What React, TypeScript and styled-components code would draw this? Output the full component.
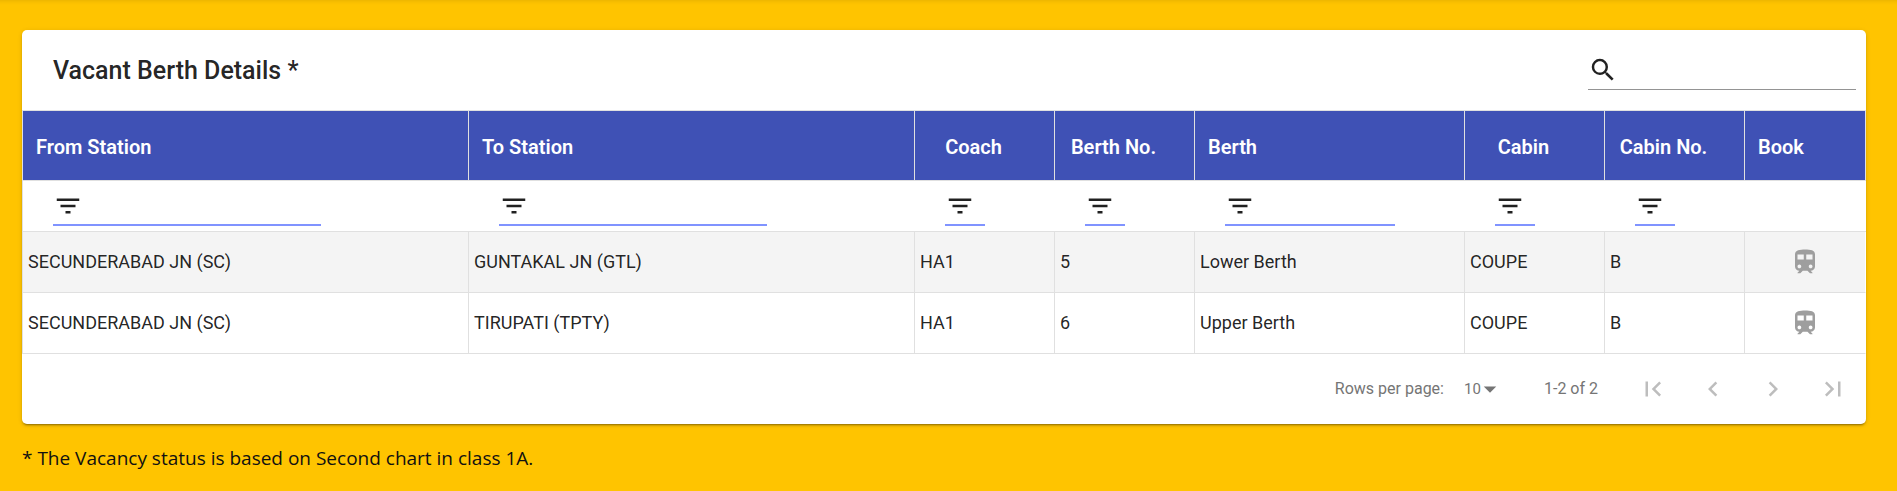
import React from "react";
import styled, { createGlobalStyle } from "styled-components";
import {
  MdArrowDropDown,
  MdChevronLeft,
  MdChevronRight,
  MdFilterList,
  MdFirstPage,
  MdLastPage,
  MdSearch,
  MdTrain,
} from "react-icons/md";

const GlobalStyle = createGlobalStyle`
  *, *::before, *::after { box-sizing: border-box; }
  body {
    margin: 0;
    background: #ffc400;
    color: rgba(0, 0, 0, 0.87);
    font-family: Roboto, "Liberation Sans", sans-serif;
  }
`;

const Page = styled.main`
  min-height: 100vh;
  padding: 30px 31px 20px 22px;
  background: #ffc400;
  box-shadow: inset 0 5px 4px -4px rgba(0, 0, 0, 0.1);
`;

const Card = styled.section`
  background: #fff;
  border-radius: 5px;
  box-shadow: 0 3px 1px -2px rgba(0, 0, 0, 0.2), 0 2px 2px 0 rgba(0, 0, 0, 0.14),
    0 1px 5px 0 rgba(0, 0, 0, 0.12);
`;

const Toolbar = styled.header`
  display: flex;
  align-items: center;
  justify-content: space-between;
  height: 80px;
  padding: 0 10px 0 31px;
`;

const Title = styled.h1`
  margin: 0;
  padding-top: 2px;
  font-size: 25px;
  line-height: 40px;
  font-weight: 500;
`;

const Field = styled.label<{ $tone: "search" | "filter" }>`
  display: flex;
  align-items: center;
  width: ${(p) => (p.$tone === "search" ? "268px" : "100%")};
  max-width: 268px;
  height: 40px;
  padding-top: ${(p) => (p.$tone === "search" ? "0" : "2px")};
  border-bottom: ${(p) => (p.$tone === "search" ? "1px solid #949494" : "2px solid #8093ff")};

  svg {
    flex: none;
    width: 30px;
    height: 30px;
  }
`;

const FieldInput = styled.input`
  flex: 1;
  min-width: 0;
  width: 0;
  padding: 0;
  border: 0;
  outline: 0;
  background: transparent;
  color: inherit;
  font: inherit;
  font-size: 18px;
`;

const Table = styled.table`
  width: 100%;
  table-layout: fixed;
  border-collapse: separate;
  border-spacing: 0;
  border-top: 1px solid #e0e0e0;
  border-left: 1px solid #e0e0e0;
`;

const Column = styled.col<{ $width?: number }>`
  width: ${(p) => (p.$width ? `${p.$width}px` : "auto")};
`;

const HeadCell = styled.th<{ $centered?: boolean }>`
  height: 70px;
  padding: 2px 35px 0 13px;
  border-right: 1px solid #e0e0e0;
  border-bottom: 1px solid #e0e0e0;
  background: #3f51b5;
  color: #fff;
  font-size: 20px;
  line-height: 24px;
  font-weight: 600;
  text-align: ${(p) => (p.$centered ? "center" : "left")};
  white-space: nowrap;
`;

const FilterCell = styled.td`
  height: 51px;
  padding: 5px 70px 5px 30px;
  border-bottom: 1px solid #e0e0e0;
`;

const BodyRow = styled.tr`
  &:nth-child(even) {
    background: #f4f4f4;
  }
`;

const BodyCell = styled.td<{ $action?: boolean }>`
  height: 61px;
  padding: 0 5px;
  border-right: 1px solid ${(p) => (p.$action ? "#fff" : "#e0e0e0")};
  border-bottom: 1px solid #e0e0e0;
  font-size: 18px;
  line-height: 24px;
  text-align: ${(p) => (p.$action ? "center" : "left")};
`;

const IconButton = styled.button<{ $size: number; $color: string }>`
  display: inline-flex;
  align-items: center;
  justify-content: center;
  width: ${(p) => p.$size}px;
  height: ${(p) => p.$size}px;
  padding: 0;
  border: 0;
  background: transparent;
  color: ${(p) => p.$color};
  vertical-align: middle;

  svg {
    width: 30px;
    height: 30px;
  }
`;

const Pagination = styled.footer`
  display: flex;
  align-items: center;
  justify-content: flex-end;
  height: 70px;
  padding-right: 3px;
  color: #757575;
  font-size: 16px;
  line-height: 20px;
`;

const PageSize = styled.label`
  display: flex;
  align-items: center;
`;

const SelectBox = styled.span`
  display: grid;
  align-items: center;
  margin-left: 20px;
  padding-bottom: 1px;
  font-size: 15px;

  select,
  svg {
    grid-area: 1 / 1;
  }

  svg {
    justify-self: end;
    width: 30px;
    height: 30px;
    pointer-events: none;
  }
`;

const Select = styled.select`
  appearance: none;
  width: 41px;
  padding: 0;
  border: 0;
  background: transparent;
  color: inherit;
  font: inherit;
`;

const Range = styled.span`
  margin: 0 25px 0 39px;
`;

const Note = styled.p`
  margin: 21px 0 0;
  color: #111;
  font-family: "Segoe UI", "Open Sans", "Noto Sans", sans-serif;
  font-size: 19px;
  line-height: 26px;
`;

const columns = [
  { title: "From Station", filter: true },
  { title: "To Station", filter: true },
  { title: "Coach", width: 140, centered: true, filter: true },
  { title: "Berth No.", width: 140, centered: true, filter: true },
  { title: "Berth", width: 270, filter: true },
  { title: "Cabin", width: 140, centered: true, filter: true },
  { title: "Cabin No.", width: 140, centered: true, filter: true },
  { title: "Book", width: 121 },
];

const berths = [
  ["SECUNDERABAD JN (SC)", "GUNTAKAL JN (GTL)", "HA1", "5", "Lower Berth", "COUPE", "B"],
  ["SECUNDERABAD JN (SC)", "TIRUPATI (TPTY)", "HA1", "6", "Upper Berth", "COUPE", "B"],
];

const pagers = [
  { label: "First page", Icon: MdFirstPage },
  { label: "Previous page", Icon: MdChevronLeft },
  { label: "Next page", Icon: MdChevronRight },
  { label: "Last page", Icon: MdLastPage },
];

export default function App() {
  return (
    <>
      <GlobalStyle />
      <Page>
        <Card>
          <Toolbar>
            <Title>Vacant Berth Details *</Title>
            <Field $tone="search">
              <MdSearch aria-hidden />
              <FieldInput type="text" aria-label="Search" />
            </Field>
          </Toolbar>
          <Table>
            <colgroup>
              {columns.map((c) => (
                <Column key={c.title} $width={c.width} />
              ))}
            </colgroup>
            <thead>
              <tr>
                {columns.map((c) => (
                  <HeadCell key={c.title} scope="col" $centered={c.centered}>
                    {c.title}
                  </HeadCell>
                ))}
              </tr>
            </thead>
            <tbody>
              <tr>
                {columns.map((c) => (
                  <FilterCell key={c.title}>
                    {c.filter && (
                      <Field $tone="filter">
                        <MdFilterList aria-hidden />
                        <FieldInput type="text" aria-label={`Filter by ${c.title}`} />
                      </Field>
                    )}
                  </FilterCell>
                ))}
              </tr>
              {berths.map((berth) => (
                <BodyRow key={berth[3]}>
                  {berth.map((value, i) => (
                    <BodyCell key={columns[i].title}>{value}</BodyCell>
                  ))}
                  <BodyCell $action>
                    <IconButton type="button" aria-label="Book berth" $size={50} $color="#9e9e9e">
                      <MdTrain aria-hidden />
                    </IconButton>
                  </BodyCell>
                </BodyRow>
              ))}
            </tbody>
          </Table>
          <Pagination>
            <PageSize>
              Rows per page:
              <SelectBox>
                <Select defaultValue="10">
                  <option>5</option>
                  <option>10</option>
                  <option>20</option>
                </Select>
                <MdArrowDropDown aria-hidden />
              </SelectBox>
            </PageSize>
            <Range>1-2 of 2</Range>
            {pagers.map(({ label, Icon }) => (
              <IconButton key={label} type="button" aria-label={label} $size={60} $color="#bdbdbd">
                <Icon aria-hidden />
              </IconButton>
            ))}
          </Pagination>
        </Card>
        <Note>* The Vacancy status is based on Second chart in class 1A.</Note>
      </Page>
    </>
  );
}
